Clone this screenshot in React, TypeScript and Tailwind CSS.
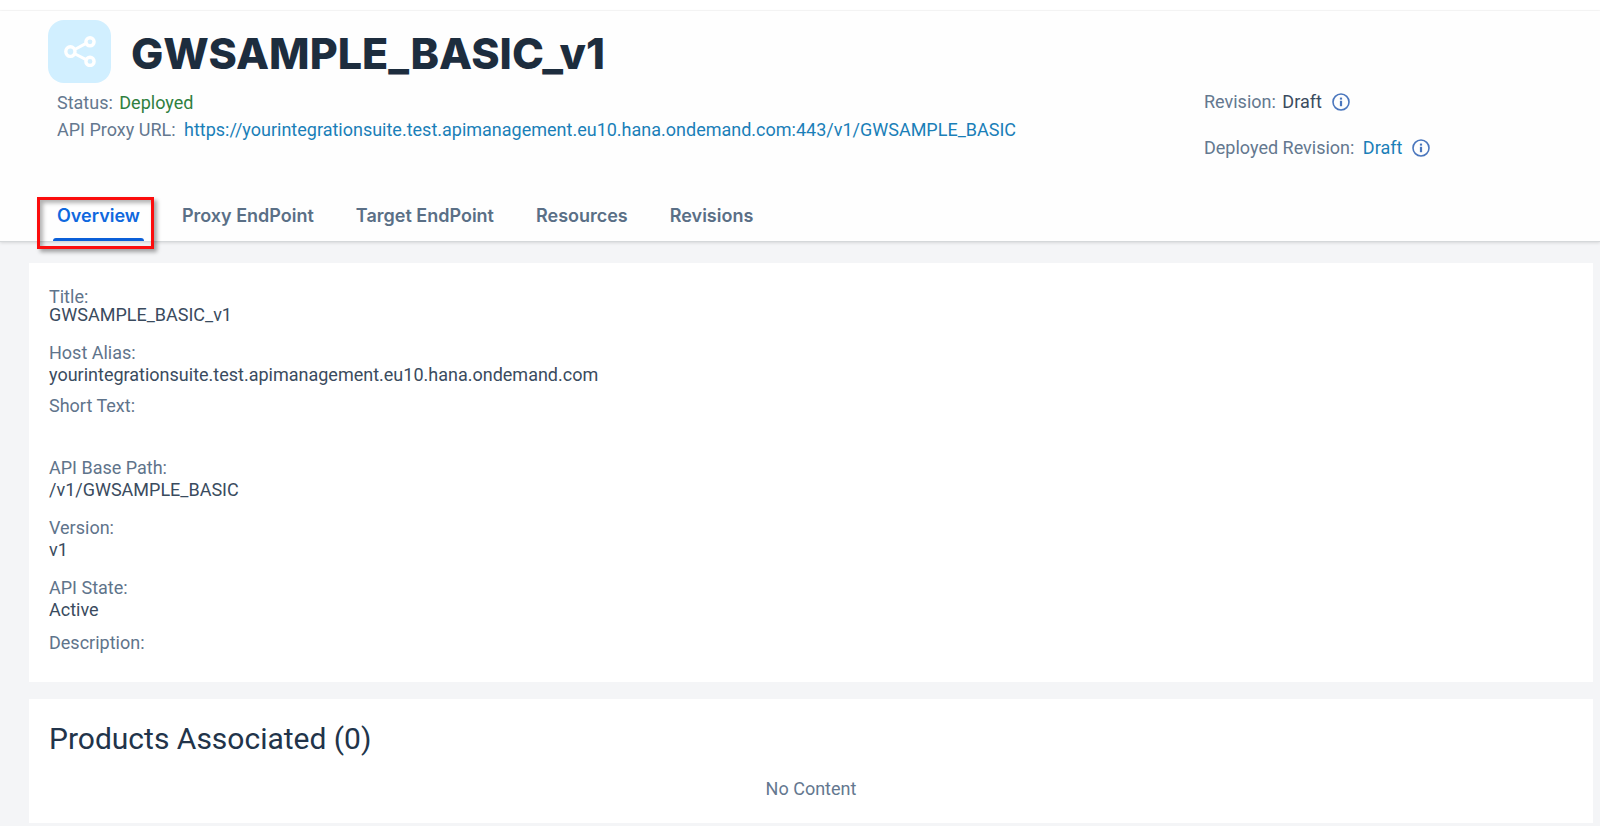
import type { ReactNode } from "react";

const tabs = ["Overview", "Proxy EndPoint", "Target EndPoint", "Resources", "Revisions"];

type Field = { label: string; value: string; spacing: string; leading: string; valueHeight: string };

const fields: Field[] = [
  { label: "Title:", value: "GWSAMPLE_BASIC_v1", spacing: "", leading: "leading-[18px]", valueHeight: "" },
  {
    label: "Host Alias:",
    value: "yourintegrationsuite.test.apimanagement.eu10.hana.ondemand.com",
    spacing: "mt-[18px]",
    leading: "leading-[22px]",
    valueHeight: "",
  },
  { label: "Short Text:", value: "", spacing: "mt-[9px]", leading: "leading-[22px]", valueHeight: "min-h-[22px]" },
  { label: "API Base Path:", value: "/v1/GWSAMPLE_BASIC", spacing: "mt-[18px]", leading: "leading-[22px]", valueHeight: "" },
  { label: "Version:", value: "v1", spacing: "mt-4", leading: "leading-[22px]", valueHeight: "" },
  { label: "API State:", value: "Active", spacing: "mt-4", leading: "leading-[22px]", valueHeight: "" },
  { label: "Description:", value: "", spacing: "mt-[11px]", leading: "leading-[22px]", valueHeight: "" },
];

function ShareIcon() {
  return (
    <svg viewBox="0 0 32 31" className="h-[31px] w-8" fill="none" stroke="#ffffff" strokeWidth="3.4" aria-hidden="true">
      <path d="M11.2 13.2 L21.6 7.6 M11.2 18 L21.6 23.4" strokeWidth="3" />
      <ellipse cx="6.4" cy="15.6" rx="4.6" ry="4.8" />
      <circle cx="26" cy="5.8" r="4.1" />
      <circle cx="26" cy="25.4" r="4.1" />
    </svg>
  );
}

function InfoButton({ label }: { label: string }) {
  return (
    <button type="button" aria-label={label} className="ml-[10px] flex">
      <svg viewBox="0 0 18 18" className="size-[18px]" fill="none" aria-hidden="true">
        <circle cx="9" cy="9" r="8" stroke="#4a76bd" strokeWidth="1.6" />
        <rect x="7.9" y="4.6" width="2.2" height="2" fill="#4a76bd" />
        <rect x="7.9" y="7.8" width="2.2" height="5.4" fill="#4a76bd" />
      </svg>
    </button>
  );
}

function Card({ className, children }: { className: string; children: ReactNode }) {
  return <section className={`bg-white px-5 ${className}`}>{children}</section>;
}

export default function App() {
  return (
    <div className="bg-white pt-[10px] font-['Roboto',sans-serif] text-[18px] text-[#3a4b5e]">
      <div className="border-t border-[#f8f8f8] bg-[#f4f5f7] pb-[3px]">
        <header className="border-b border-[#d5d8da] bg-[#fefefe] shadow-[0_1px_3px_rgba(0,0,0,0.12)]">
          <div className="flex items-center gap-5 pt-[9px] pl-12">
            <div className="flex size-[63px] items-center justify-center rounded-2xl bg-[#d1efff]">
              <ShareIcon />
            </div>
            <h1 className="pt-[3px] font-['Inter',sans-serif] text-[43px] leading-[60px] font-extrabold text-[#1d2d3e]">
              GWSAMPLE_BASIC_v1
            </h1>
          </div>

          <div className="mt-[6px] flex text-[#64788f]">
            <div className="flex-1 pl-[57px] leading-[27px]">
              <p>
                Status: <span className="ml-[2px] text-[#2f8040]">Deployed</span>
              </p>
              <p>
                API Proxy URL:{" "}
                <a
                  className="ml-1 text-[#1a7fb8]"
                  href="https://yourintegrationsuite.test.apimanagement.eu10.hana.ondemand.com:443/v1/GWSAMPLE_BASIC"
                >
                  https://yourintegrationsuite.test.apimanagement.eu10.hana.ondemand.com:443/v1/GWSAMPLE_BASIC
                </a>
              </p>
            </div>
            <div className="flex w-1/4 flex-col gap-6 pt-[2px] pl-1 leading-[22px]">
              <div className="flex items-center">
                <span>
                  Revision: <span className="ml-[2px] text-[#3a4b5e]">Draft</span>
                </span>
                <InfoButton label="About the revision" />
              </div>
              <div className="flex items-center">
                <span>
                  Deployed Revision:{" "}
                  <a href="#revision" className="ml-1 text-[#1a7fb8]">
                    Draft
                  </a>
                </span>
                <InfoButton label="About the deployed revision" />
              </div>
            </div>
          </div>

          <nav className="mt-[46px] flex gap-[34px] pl-[53px] font-['Inter',sans-serif] leading-[22px] font-semibold">
            {tabs.map((tab, index) => (
              <button
                key={tab}
                type="button"
                aria-current={index === 0 ? "page" : undefined}
                className={index === 0 ? "relative text-[#0f68de]" : "text-[#5a6f86]"}
              >
                <span className="block px-1 pb-[11px]">{tab}</span>
                <span className={index === 0 ? "block h-[3px] rounded-t-sm bg-[#0b5fd8]" : "block h-[3px]"} />
                {index === 0 && (
                  <span className="pointer-events-none absolute -top-2 -right-[10px] -bottom-2 -left-4 z-10 border-[3px] border-[#fb0d0d] shadow-[3px_3px_4px_rgba(0,0,0,0.35),inset_3px_3px_4px_rgba(0,0,0,0.3)]" />
                )}
              </button>
            ))}
          </nav>
        </header>

        <main className="flex flex-col gap-[17px] pt-[21px] pr-[7px] pl-[29px]">
          <Card className="pt-[25px] pb-7">
            <dl>
              {fields.map((field) => (
                <div key={field.label} className={`${field.spacing} ${field.leading}`}>
                  <dt className="text-[#5f748b]">{field.label}</dt>
                  <dd className={field.valueHeight}>{field.value}</dd>
                </div>
              ))}
            </dl>
          </Card>

          <Card className="pt-5 pb-[23px]">
            <h2 className="text-[30px] leading-10 text-[#22344a]">Products Associated (0)</h2>
            <p className="mt-[19px] text-center leading-[22px] text-[#64788f]">No Content</p>
          </Card>
        </main>
      </div>
    </div>
  );
}
